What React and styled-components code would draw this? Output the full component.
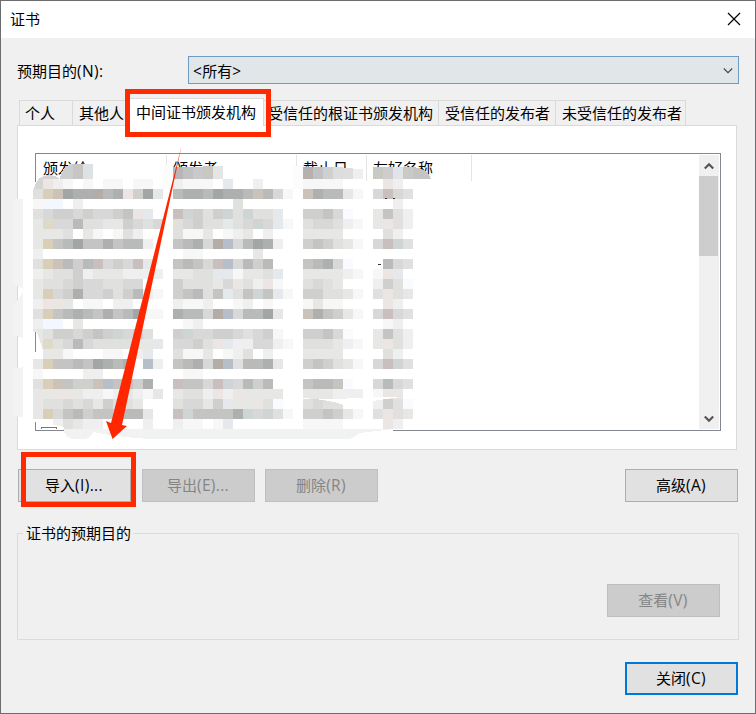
import React from 'react';
import styled, { createGlobalStyle } from 'styled-components';

const GlobalStyle = createGlobalStyle`
  * { box-sizing: border-box; }
  body { margin: 0; overflow: hidden; }
`;

const Dialog = styled.main`
  position: relative;
  width: 756px;
  height: 714px;
  border: 1px solid #6d6d6f;
  background: #f0f0f0;
  color: #000;
  font: 15px/20px "Open Sans", "Noto Sans CJK SC", sans-serif;
  white-space: nowrap;
  overflow: hidden;
`;

const TitleBar = styled.header`
  display: flex;
  align-items: center;
  justify-content: space-between;
  height: 37px;
  padding: 0 14px 2px 9px;
  background: #fff;
`;

const Content = styled.div`
  padding: 18px 16px 0 16px;
`;

const PurposeRow = styled.div`
  display: flex;
  align-items: center;
  height: 28px;
`;

const PurposeLabel = styled.label`
  width: 171px;
  padding-top: 2px;
`;

const Latin = styled.span`
  font-size: 15.5px;
  letter-spacing: 0.35px;
`;

const Select = styled.div`
  display: flex;
  align-items: center;
  justify-content: space-between;
  width: 551px;
  height: 28px;
  padding: 1px 5px 0 4px;
  border: 1px solid #6f9bc2;
  background: #e1e6e9;
`;

const TabList = styled.div`
  display: flex;
  align-items: flex-end;
  height: 28px;
  margin: 14px 0 0 2px;
`;

const Tab = styled.div`
  width: ${(p) => p.$w}px;
  height: ${(p) => (p.$active ? 28 : 26)}px;
  padding: ${(p) => (p.$active ? '3px' : '2px')} 0 0 ${(p) => p.$pad}px;
  margin-right: -1px;
  border: 1px solid #dadada;
  border-bottom-color: ${(p) => (p.$active ? '#fff' : '#dadada')};
  background: ${(p) => (p.$active ? '#fff' : '#f0f0f0')};
  overflow: hidden;
`;

const TabPanel = styled.section`
  width: 720px;
  height: 325px;
  margin-top: -1px;
  padding: 27px 0 0 17px;
  border: 1px solid #dadada;
  background: #fff;
`;

const ListBox = styled.div`
  display: flex;
  justify-content: space-between;
  width: 686px;
  height: 278px;
  padding: 1px;
  border: 1px solid #828790;
`;

const ListHeader = styled.div`
  display: flex;
  height: 26px;
`;

const Column = styled.div`
  width: ${(p) => p.$w}px;
  padding: 3px 0 0 6px;
  border-right: 1px solid #e5e5e5;
`;

const ScrollBar = styled.div`
  display: flex;
  flex-direction: column;
  width: 20px;
  background: #f0f0f0;
`;

const Thumb = styled.div`
  width: 19px;
  height: 80px;
  margin-bottom: auto;
  background: #cdcdcd;
`;

const ScrollButton = styled.div`
  display: flex;
  align-items: center;
  justify-content: center;
  height: 21px;
`;

const ButtonRow = styled.div`
  display: flex;
  gap: 10px;
  width: 721px;
  margin-top: 19px;
  padding-left: 1px;
`;

const Button = styled.button`
  width: 113px;
  height: 33px;
  padding: 0 1px 1px 0;
  border: ${(p) => (p.$primary ? '2px solid #0078d7' : '1px solid #adadad')};
  background: #e1e1e1;
  color: #000;
  font: inherit;
  margin-right: ${(p) => (p.$gap ? 1 : 0)}px;
  margin-left: ${(p) => (p.$end ? 'auto' : 0)};
  &:disabled {
    border-color: #bfbfbf;
    background: #ccc;
    color: #858585;
  }
`;

const Group = styled.fieldset`
  display: flex;
  align-items: flex-end;
  justify-content: flex-end;
  width: 722px;
  height: 117px;
  margin: 21px 0 0;
  padding: 0 18px 22px 0;
  border: 1px solid #dcdcdc;
`;

const Legend = styled.legend`
  margin-left: 5px;
  padding: 0 2px 0 3px;
`;

const Footer = styled.footer`
  display: flex;
  width: 721px;
  margin-top: 22px;
`;

const Overlay = styled.svg`
  position: absolute;
  left: -1px;
  top: -1px;
  pointer-events: none;
`;

const SHADES = {
  0: '#f7f7f7', 1: '#efefef', 2: '#e7e7e6', 3: '#e0e0df', 4: '#d8d8d8',
  5: '#cfcfce', 6: '#c4c4c2', 7: '#b9baba', 8: '#aeb0b0', 9: '#a3a6a6',
  y: '#d9cfb8', t: '#cbc3b9', p: '#c8bfbe', b: '#b6bec8', r: '#ebe6e3',
  l: '#e5e9ec', w: '#f3f7ff', g: '#dfdac7', n: '#b3ada5', c: '#cfd4d5',
  q: '#f9fbfe',
};

// Each row: four column blocks of 10px cells.
const ROWS = [
  ['1r10.0.00.00.', '1000.l..1...', '0000..', '.r1.'],
  ['3yt988n78r592', '78879887t740', 't87720', '4p43'],
  ['0ww.1........', '......3.....', '......', '..1.'],
  ['3455454456rl.', 'pc535c3c33l.', '5564q.', '2631'],
  ['2g44733225434', '34533l34c4l0', '344310', '2r31'],
  ['2223.20.031..', '3002.012.1..', '2222..', '.31.'],
  ['2y6796686771.', '6784nb47981.', '565320', '4pc3'],
  ['1............', '.00.....2...', '......', '....'],
  ['3yt757p454pl.', '6764pb4757..', '6784q.', '.743'],
  ['1233512221111', '2233ll0223l.', '222210', '0rl.'],
  ['23345443344..', '533324r31r0.', '3432..', '153q'],
  ['2y45844535710', '56736l36c6l0', '553320', '3r32'],
  ['1rr2.00.11...', '1001..01.0..', '0r00..', '.r1.'],
  ['3y67876867900', '8774nb47792.', 't86520', '4p43'],
  ['1ww.2........', '.01.........', '......', '.01.'],
  ['23554565c453.', '5c445543450.', '5564q.', '2631'],
  ['2g3474333322l', '4453rl114410', '333210', '2r31'],
  ['.220...00.1l.', '3002.013.1..', '2222..', '.31.'],
  ['2y66769878.b1', '6784nb37782.', '565320', '4pc3'],
  ['0....11......', '.00.........', '......', '....'],
  ['3yt655tb6p58.', 'p664pc4757..', '6776q.', '4743'],
  ['22rr211012102', '2331r1r2222.', '222111', '0r2.'],
  ['23343425332..', '34425l22r3q.', '3433..', '153q'],
  ['2y4675665772.', 'pc66668c4c30', '556520', '3r32'],
  ['..13211....1.', '100.0l......', '0000..', '.r1.'],
];
const BLOCKS = [33, 173, 303, 373];

const HEADER_CELLS = [
  [173, 167, '#b8b5b4'], [183, 167, '#c1c1c4'], [193, 167, '#c9c9cb'], [203, 166, '#cac7c2'], [213, 166, '#e4e6e6'],
  [303, 167, '#b5b2ae'], [313, 167, '#c1c2c7'], [323, 167, '#d0d0d0'], [333, 167, '#dcdedb'], [343, 168, '#dededf'], [353, 169, '#efefef'],
];

function Mosaic() {
  return (
    <g shapeRendering="crispEdges">
      <path d="M13 199h10v90l-10-5zM23 292l-10 15v28l10 3zM23 367l-10 2v45l10 4z" fill="#f3f3f3" />
      <path d="M33 182H44V350L40 333 37 332V332H33zM33 352H43V423L64 427V432H393V429H44L33 422z" fill="#fff" />
      {HEADER_CELLS.map(([x, y, c]) => (
        <rect key={x} x={x} y={y} width="10" height={179 - y} fill={c} />
      ))}
      <path d="M163 165h10v24h-10zM293 166h10v23h-10z" fill="#fcfcfc" />
      <path d="M60 179C60 170 66 164 74 164V179z" fill="#cdced0" />
      <path d="M73 164h10v15H73z" fill="#c8c5c5" />
      <path d="M83 164h10v15H83z" fill="#dfe2e4" />
      <path d="M34 189C35 179 42 175 50 175C54 175 58 177 60 179V189z" fill="#d5d5d6" />
      <path d="M373 167h10v12h-10z" fill="#c9c9c4" />
      <path d="M383 167h10v12h-10z" fill="#cfccce" />
      <path d="M393 167h10v12h-10z" fill="#e2e3e8" />
      <path d="M403 167h10v12h-10z" fill="#c9c9c5" />
      <path d="M413 167Q427 168 431 179H413z" fill="#c4c4c2" />
      {ROWS.map((row, j) =>
        row.map((block, b) =>
          [...block].map((ch, i) =>
            SHADES[ch] && !(j === 0 && b === 0 && i === 0) ? (
              <rect key={`${j}-${b}-${i}`} x={BLOCKS[b] + i * 10} y={179 + j * 10} width="10" height="10" fill={SHADES[ch]} />
            ) : null
          )
        )
      )}
      <path d="M33 332H37L43 351H33z" fill="#fff" />
      <path d="M35 332h1v20h-1z" fill="#828790" />
      <path d="M303 398.500L335 399L383 397L400 397L373 401V405H343Q332 400 303 398z" fill="#fff" />
      <path d="M33 420L64 427V430H36V422z" fill="#fff" />
      <path d="M35 422h1v9h-1zM35 430h28v1H35z" fill="#828790" />
      <path d="M41 427h16v2h-1v-1H42v1h-1z" fill="#8f7350" />
      <path d="M385 198h2v1h-2zM393 198h2v1h-2zM378 264h3v1h-3z" fill="#373230" />
      <path d="M63 429H393L360 433Q355 437 350 439H150Q118 437 93 432Q90 439 85 439H72Q66 438 63 429z" fill="#f1f3f3" />
    </g>
  );
}

const Chevron = ({ w = 10, up, bold }) => (
  <svg width={w} height="8" viewBox="0 0 10 8" fill="none" stroke={bold ? '#555' : '#444'} strokeWidth={bold ? 2.2 : 1.1}>
    <path d={up ? 'M.8 6.500 5 2.300 9.200 6.500' : 'M.8 1.500 5 5.700 9.200 1.500'} />
  </svg>
);

export default function App() {
  return (
    <>
      <GlobalStyle />
      <Dialog>
        <TitleBar>
          <span>证书</span>
          <svg width="14" height="14" viewBox="0 0 14 14" stroke="#000" strokeWidth="1.200">
            <path d="M1 1 13 13M13 1 1 13" />
          </svg>
        </TitleBar>
        <Content>
          <PurposeRow>
            <PurposeLabel>预期目的<Latin>(N):</Latin></PurposeLabel>
            <Select>
              <span><Latin>&lt;</Latin>所有<Latin>&gt;</Latin></span>
              <Chevron />
            </Select>
          </PurposeRow>
          <TabList>
            <Tab $w={54} $pad={5}>个人</Tab>
            <Tab $w={56} $pad={6}>其他人</Tab>
            <Tab $w={137} $pad={8} $active>中间证书颁发机构</Tab>
            <Tab $w={176} $pad={4}>受信任的根证书颁发机构</Tab>
            <Tab $w={118} $pad={6}>受信任的发布者</Tab>
            <Tab $w={131} $pad={6}>未受信任的发布者</Tab>
          </TabList>
          <TabPanel>
            <ListBox>
              <ListHeader>
                <Column $w={130}>颁发给</Column>
                <Column $w={130}>颁发者</Column>
                <Column $w={70}>截止日</Column>
                <Column $w={105}>友好名称</Column>
              </ListHeader>
              <ScrollBar>
                <ScrollButton><Chevron up bold /></ScrollButton>
                <Thumb />
                <ScrollButton><Chevron bold /></ScrollButton>
              </ScrollBar>
            </ListBox>
          </TabPanel>
          <ButtonRow>
            <Button $gap>导入<Latin>(I)...</Latin></Button>
            <Button disabled>导出<Latin>(E)...</Latin></Button>
            <Button disabled>删除<Latin>(R)</Latin></Button>
            <Button $end>高级<Latin>(A)</Latin></Button>
          </ButtonRow>
          <Group>
            <Legend>证书的预期目的</Legend>
            <Button disabled>查看<Latin>(V)</Latin></Button>
          </Group>
          <Footer>
            <Button $primary $end>关闭<Latin>(C)</Latin></Button>
          </Footer>
        </Content>
        <Overlay width="756" height="714" viewBox="0 0 756 714">
          <Mosaic />
          <path d="M181.500 146 122 425 127 426 112.500 439 106 421 111 423z" fill="#ff2600" />
          <g fill="none" stroke="#ff2a00" strokeWidth="5">
            <rect x="127.500" y="91.500" width="141" height="43" />
            <rect x="23.500" y="454.500" width="110" height="50" />
          </g>
        </Overlay>
      </Dialog>
    </>
  );
}
